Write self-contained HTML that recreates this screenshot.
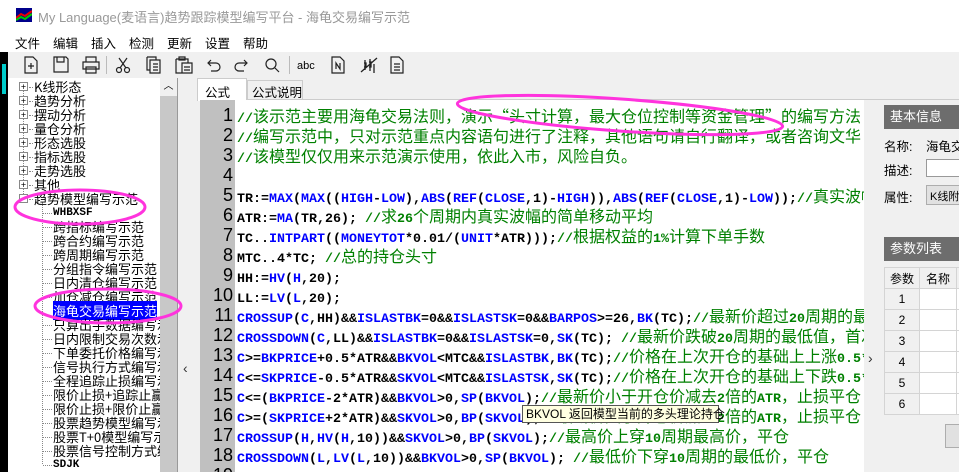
<!DOCTYPE html>
<html><head><meta charset="utf-8"><style>
*{margin:0;padding:0;box-sizing:border-box}
body{width:959px;height:472px;overflow:hidden;background:#f0f0f0;position:relative;font-family:"Liberation Sans","Noto Sans CJK SC",sans-serif;font-size:12px}
.abs{position:absolute}
#title{left:0;top:0;width:959px;height:32px;background:#fff}
#title span{position:absolute;left:38px;top:7px;font-size:13px;color:#999;white-space:nowrap}
#menu{left:0;top:32px;width:959px;height:20px;background:#fff;font-size:12.5px}
#menu span{position:absolute;top:1px}
#tb{left:8px;top:52px;width:951px;height:26px;background:#f0f0f0}
#tb svg{position:absolute;top:4px}
#strip{left:0;top:52px;width:8px;height:420px;background:#000}
#tree{left:8px;top:78px;width:152px;height:394px;background:#fff;font-family:"WenQuanYi Zen Hei","Noto Sans CJK SC",sans-serif;font-size:13px;overflow:hidden}
#tree div{position:absolute;white-space:nowrap;line-height:14px;height:14px}
.pm{position:absolute;left:11px;width:9px;height:9px;border:1px solid #888;font-size:9px;line-height:7px;text-align:center;color:#000;background:#fff}
.dl{position:absolute;height:0;border-top:1px dotted #888}
#sb{left:160px;top:78px;width:17px;height:394px;background:#c8c8c8}
#split{left:177px;top:78px;width:23px;height:394px;background:#f0f0f0;border-left:1px solid #999}
#code{left:200px;top:100px;width:664px;height:372px;background:#fff;overflow:hidden}
#gut{left:0;top:0;width:35px;height:372px;background:#c0c0c0}
.ln{position:absolute;left:0;width:33px;text-align:right;font-family:"Liberation Sans",sans-serif;font-size:18px;line-height:20px;color:#000}
.cl{position:absolute;left:37px;white-space:pre;height:20px;line-height:20px;font-family:"Noto Sans CJK SC",sans-serif;font-size:16px;color:#000}
.cl b,.cl s{font-family:"Liberation Mono",monospace;font-size:13.33px;font-weight:bold;text-decoration:none}
.k{color:#0000ff}.g{color:#008000}
#right{left:864px;top:100px;width:95px;height:372px;background:#f0f0f0}
.hd{position:absolute;left:20px;width:80px;height:24px;background:#6d6d6d;color:#fff;font-size:13px;line-height:24px;padding-left:6px}
table{position:absolute;left:20px;top:167px;border-collapse:collapse;font-size:12px;table-layout:fixed;width:110px}
td{border:1px solid #d4d4d4;height:21px;text-align:center;background:#fff}
td.h{background:#f0f0f0}
</style></head><body>
<div id="title" class="abs">
<svg class="abs" style="left:16px;top:8px" width="16" height="14"><rect width="16" height="14" fill="#00008b"/><path d="M0 10 L5 6 L9 8 L16 3" stroke="#e00" stroke-width="2" fill="none"/><path d="M0 12 L5 9 L9 11 L16 6" stroke="#0c0" stroke-width="2" fill="none"/></svg>
<span>My Language(麦语言)趋势跟踪模型编写平台 - 海龟交易编写示范</span></div>
<div id="menu" class="abs"><span style="left:15px">文件</span><span style="left:53px">编辑</span><span style="left:91px">插入</span><span style="left:129px">检测</span><span style="left:167px">更新</span><span style="left:205px">设置</span><span style="left:243px">帮助</span></div>
<div id="strip" class="abs"><div class="abs" style="left:2px;top:12px;width:4px;height:30px;background:#0cc"></div></div>
<div id="tb" class="abs">
<svg style="left:15px" width="16" height="18" fill="none" stroke="#222" stroke-width="1.2"><path d="M2 1h8l4 4v12H2z M5 10h6 M8 7v6"/></svg>
<svg style="left:45px" width="16" height="18" fill="none" stroke="#222" stroke-width="1.2"><path d="M1 1h12l2 2v13H1z M4 1v5h7V1"/></svg>
<svg style="left:74px" width="18" height="18" fill="none" stroke="#222" stroke-width="1.2"><path d="M4 6V1h10v5 M1 6h16v7H1z M4 11h10v6H4z"/></svg>
<div class="abs" style="left:98px;top:4px;width:1px;height:18px;background:#bbb"></div>
<svg style="left:107px" width="16" height="18" fill="none" stroke="#222" stroke-width="1.2"><circle cx="4" cy="14" r="2.5"/><circle cx="12" cy="14" r="2.5"/><path d="M5 12L12 2 M11 12L4 2"/></svg>
<svg style="left:138px" width="16" height="18" fill="none" stroke="#222" stroke-width="1.2"><path d="M4 4h10v13H4z M1 1h9v3 M1 1v13h3 M7 8h5 M7 11h5 M7 14h5"/></svg>
<svg style="left:167px" width="18" height="18" fill="none" stroke="#222" stroke-width="1.2"><path d="M1 3h12v4 M1 3v14h6 M4 1h6v3H4z M7 7h10v10H7z M9 11h6 M9 14h6"/></svg>
<svg style="left:197px" width="16" height="18" fill="none" stroke="#222" stroke-width="1.2"><path d="M3 7h8a4 4 0 0 1 0 8H6 M6 4L3 7l3 3"/></svg>
<svg style="left:226px" width="16" height="18" fill="none" stroke="#222" stroke-width="1.2"><path d="M13 7H5a4 4 0 0 0 0 8h5 M10 4l3 3-3 3"/></svg>
<svg style="left:256px" width="16" height="18" fill="none" stroke="#222" stroke-width="1.2"><circle cx="7" cy="8" r="5"/><path d="M11 12l4 4"/></svg>
<div class="abs" style="left:281px;top:4px;width:1px;height:18px;background:#bbb"></div>
<span class="abs" style="left:289px;top:8px;font-size:11px">abc</span>
<svg style="left:322px" width="16" height="18" fill="none" stroke="#222" stroke-width="1.2"><path d="M2 1h8l4 4v12H2z M6 13V7l4 6V7"/></svg>
<svg style="left:352px" width="18" height="18" fill="none" stroke="#222" stroke-width="1.3"><path d="M1 16L17 2 M5 4v10 M4 7h2v4H4 M10 3v12 M9 6h2v5H9 M14 8v9"/></svg>
<svg style="left:381px" width="16" height="18" fill="none" stroke="#222" stroke-width="1.2"><path d="M2 1h8l4 4v12H2z M5 8h6 M5 11h6 M5 14h6"/></svg>
</div>
<div id="tree" class="abs">
<div style="left:15px;top:8px;width:0;height:114px;border-left:1px dotted #888"></div>
<div style="left:34px;top:124px;width:0;height:262px;border-left:1px dotted #888"></div>
<div style="top:2px;left:0"><span class="pm" style="top:2px">+</span><span class="dl" style="left:21px;top:7px;width:4px"></span><span style="position:absolute;left:26px">K线形态</span></div>
<div style="top:16px;left:0"><span class="pm" style="top:2px">+</span><span class="dl" style="left:21px;top:7px;width:4px"></span><span style="position:absolute;left:26px">趋势分析</span></div>
<div style="top:30px;left:0"><span class="pm" style="top:2px">+</span><span class="dl" style="left:21px;top:7px;width:4px"></span><span style="position:absolute;left:26px">摆动分析</span></div>
<div style="top:44px;left:0"><span class="pm" style="top:2px">+</span><span class="dl" style="left:21px;top:7px;width:4px"></span><span style="position:absolute;left:26px">量仓分析</span></div>
<div style="top:58px;left:0"><span class="pm" style="top:2px">+</span><span class="dl" style="left:21px;top:7px;width:4px"></span><span style="position:absolute;left:26px">形态选股</span></div>
<div style="top:72px;left:0"><span class="pm" style="top:2px">+</span><span class="dl" style="left:21px;top:7px;width:4px"></span><span style="position:absolute;left:26px">指标选股</span></div>
<div style="top:86px;left:0"><span class="pm" style="top:2px">+</span><span class="dl" style="left:21px;top:7px;width:4px"></span><span style="position:absolute;left:26px">走势选股</span></div>
<div style="top:100px;left:0"><span class="pm" style="top:2px">+</span><span class="dl" style="left:21px;top:7px;width:4px"></span><span style="position:absolute;left:26px">其他</span></div>
<div style="top:114px;left:0"><span class="pm" style="top:2px">−</span><span class="dl" style="left:21px;top:7px;width:4px"></span><span style="position:absolute;left:26px">趋势模型编写示范</span></div>
<div style="left:35px;top:135px;width:9px;border-top:1px dotted #888;height:0"></div>
<div style="left:45px;top:128px;font-family:'Liberation Mono';font-size:11px;font-weight:bold">WHBXSF</div>
<div style="left:45px;top:142px">跨指标编写示范</div>
<div style="left:45px;top:156px">跨合约编写示范</div>
<div style="left:45px;top:170px">跨周期编写示范</div>
<div style="left:45px;top:184px">分组指令编写示范</div>
<div style="left:45px;top:198px">日内清仓编写示范</div>
<div style="left:45px;top:212px">加仓减仓编写示范</div>
<div style="left:45px;top:226px"><span style="background:#00f;color:#fff">海龟交易编写示范</span></div>
<div style="left:45px;top:240px">只算出手数据编写示范</div>
<div style="left:45px;top:254px">日内限制交易次数示范</div>
<div style="left:45px;top:268px">下单委托价格编写示范</div>
<div style="left:45px;top:282px">信号执行方式编写示范</div>
<div style="left:45px;top:296px">全程追踪止损编写示范</div>
<div style="left:45px;top:310px">限价止损+追踪止赢编写</div>
<div style="left:45px;top:324px">限价止损+限价止赢编写</div>
<div style="left:45px;top:338px">股票趋势模型编写示范</div>
<div style="left:45px;top:352px">股票T+0模型编写示范</div>
<div style="left:45px;top:366px">股票信号控制方式编写</div>
<div style="left:45px;top:380px;font-family:'Liberation Mono';font-size:11px;font-weight:bold">SDJK</div>
<div style="left:35px;top:149px;width:9px;border-top:1px dotted #888;height:0"></div>
<div style="left:35px;top:163px;width:9px;border-top:1px dotted #888;height:0"></div>
<div style="left:35px;top:177px;width:9px;border-top:1px dotted #888;height:0"></div>
<div style="left:35px;top:191px;width:9px;border-top:1px dotted #888;height:0"></div>
<div style="left:35px;top:205px;width:9px;border-top:1px dotted #888;height:0"></div>
<div style="left:35px;top:219px;width:9px;border-top:1px dotted #888;height:0"></div>
<div style="left:35px;top:247px;width:9px;border-top:1px dotted #888;height:0"></div>
<div style="left:35px;top:261px;width:9px;border-top:1px dotted #888;height:0"></div>
<div style="left:35px;top:275px;width:9px;border-top:1px dotted #888;height:0"></div>
<div style="left:35px;top:289px;width:9px;border-top:1px dotted #888;height:0"></div>
<div style="left:35px;top:303px;width:9px;border-top:1px dotted #888;height:0"></div>
<div style="left:35px;top:317px;width:9px;border-top:1px dotted #888;height:0"></div>
<div style="left:35px;top:331px;width:9px;border-top:1px dotted #888;height:0"></div>
<div style="left:35px;top:345px;width:9px;border-top:1px dotted #888;height:0"></div>
<div style="left:35px;top:359px;width:9px;border-top:1px dotted #888;height:0"></div>
<div style="left:35px;top:373px;width:9px;border-top:1px dotted #888;height:0"></div>
<div style="left:35px;top:387px;width:9px;border-top:1px dotted #888;height:0"></div>
</div>
<div id="sb" class="abs"><div class="abs" style="left:0;top:0;width:17px;height:18px;background:#f0f0f0;text-align:center;font-size:10px;line-height:18px">︿</div></div>
<div id="split" class="abs"><div class="abs" style="left:5px;top:282px;font-size:14px;color:#333">‹</div></div>
<div class="abs" style="left:197px;top:78px;width:50px;height:23px;background:#fff;border:1px solid #ccc;border-bottom:none;font-size:12.5px;padding:3px 0 0 7px">公式</div>
<div class="abs" style="left:247px;top:80px;width:56px;height:20px;background:#f0f0f0;border:1px solid #ccc;font-size:12.5px;padding:1px 0 0 4px">公式说明</div>
<div class="abs" style="left:303px;top:99px;width:656px;height:1px;background:#ccc"></div>
<div id="code" class="abs">
<div id="gut" class="abs"></div>
<div class="ln" style="top:5px">1</div><div class="ln" style="top:25px">2</div><div class="ln" style="top:45px">3</div><div class="ln" style="top:65px">4</div><div class="ln" style="top:85px">5</div><div class="ln" style="top:105px">6</div><div class="ln" style="top:125px">7</div><div class="ln" style="top:145px">8</div><div class="ln" style="top:165px">9</div><div class="ln" style="top:185px">10</div><div class="ln" style="top:205px">11</div><div class="ln" style="top:225px">12</div><div class="ln" style="top:245px">13</div><div class="ln" style="top:265px">14</div><div class="ln" style="top:285px">15</div><div class="ln" style="top:305px">16</div><div class="ln" style="top:325px">17</div><div class="ln" style="top:345px">18</div><div class="ln" style="top:365px">19</div>
<div class="cl g" style="top:5px"><b>//</b>该示范主要用海龟交易法则，演示“头寸计算，最大仓位控制等资金管理”的编写方法</div>
<div class="cl g" style="top:25px"><b>//</b>编写示范中，只对示范重点内容语句进行了注释，其他语句请自行翻译，或者咨询文华</div>
<div class="cl g" style="top:45px"><b>//</b>该模型仅仅用来示范演示使用，依此入市，风险自负。</div>
<div class="cl" style="top:85px"><b>TR:=<s class="k">MAX</s>(<s class="k">MAX</s>((<s class="k">HIGH</s>-<s class="k">LOW</s>),<s class="k">ABS</s>(<s class="k">REF</s>(<s class="k">CLOSE</s>,1)-<s class="k">HIGH</s>)),<s class="k">ABS</s>(<s class="k">REF</s>(<s class="k">CLOSE</s>,1)-<s class="k">LOW</s>));</b><span class="g"><b>//</b>真实波幅</span></div>
<div class="cl" style="top:105px"><b>ATR:=<s class="k">MA</s>(TR,26); </b><span class="g"><b>//</b>求<b>26</b>个周期内真实波幅的简单移动平均</span></div>
<div class="cl" style="top:125px"><b>TC..<s class="k">INTPART</s>((<s class="k">MONEYTOT</s>*0.01/(<s class="k">UNIT</s>*ATR)));</b><span class="g"><b>//</b>根据权益的<b>1%</b>计算下单手数</span></div>
<div class="cl" style="top:145px"><b>MTC..4*TC; </b><span class="g"><b>//</b>总的持仓头寸</span></div>
<div class="cl" style="top:165px"><b>HH:=<s class="k">HV</s>(<s class="k">H</s>,20);</b></div>
<div class="cl" style="top:185px"><b>LL:=<s class="k">LV</s>(<s class="k">L</s>,20);</b></div>
<div class="cl" style="top:205px"><b><s class="k">CROSSUP</s>(<s class="k">C</s>,HH)&amp;&amp;<s class="k">ISLASTBK</s>=0&amp;&amp;<s class="k">ISLASTSK</s>=0&amp;&amp;<s class="k">BARPOS</s>&gt;=26,<s class="k">BK</s>(TC);</b><span class="g"><b>//</b>最新价超过<b>20</b>周期的最高</span></div>
<div class="cl" style="top:225px"><b><s class="k">CROSSDOWN</s>(<s class="k">C</s>,LL)&amp;&amp;<s class="k">ISLASTBK</s>=0&amp;&amp;<s class="k">ISLASTSK</s>=0,<s class="k">SK</s>(TC); </b><span class="g"><b>//</b>最新价跌破<b>20</b>周期的最低值，首次</span></div>
<div class="cl" style="top:245px"><b><s class="k">C</s>&gt;=<s class="k">BKPRICE</s>+0.5*ATR&amp;&amp;<s class="k">BKVOL</s>&lt;MTC&amp;&amp;<s class="k">ISLASTBK</s>,<s class="k">BK</s>(TC);</b><span class="g"><b>//</b>价格在上次开仓的基础上上涨<b>0.5*</b></span></div>
<div class="cl" style="top:265px"><b><s class="k">C</s>&lt;=<s class="k">SKPRICE</s>-0.5*ATR&amp;&amp;<s class="k">SKVOL</s>&lt;MTC&amp;&amp;<s class="k">ISLASTSK</s>,<s class="k">SK</s>(TC);</b><span class="g"><b>//</b>价格在上次开仓的基础上下跌<b>0.5*</b></span></div>
<div class="cl" style="top:285px"><b><s class="k">C</s>&lt;=(<s class="k">BKPRICE</s>-2*ATR)&amp;&amp;<s class="k">BKVOL</s>&gt;0,<s class="k">SP</s>(<s class="k">BKVOL</s>);</b><span class="g"><b>//</b>最新价小于开仓价减去<b>2</b>倍的<b>ATR</b>，止损平仓</span></div>
<div class="cl" style="top:305px"><b><s class="k">C</s>&gt;=(<s class="k">SKPRICE</s>+2*ATR)&amp;&amp;<s class="k">SKVOL</s>&gt;0,<s class="k">BP</s>(<s class="k">SKVOL</s>);</b><span class="g"><b>//</b>最新价大于开仓价加上<b>2</b>倍的<b>ATR</b>，止损平仓</span></div>
<div class="cl" style="top:325px"><b><s class="k">CROSSUP</s>(<s class="k">H</s>,<s class="k">HV</s>(<s class="k">H</s>,10))&amp;&amp;<s class="k">SKVOL</s>&gt;0,<s class="k">BP</s>(<s class="k">SKVOL</s>);</b><span class="g"><b>//</b>最高价上穿<b>10</b>周期最高价，平仓</span></div>
<div class="cl" style="top:345px"><b><s class="k">CROSSDOWN</s>(<s class="k">L</s>,<s class="k">LV</s>(<s class="k">L</s>,10))&amp;&amp;<s class="k">BKVOL</s>&gt;0,<s class="k">SP</s>(<s class="k">BKVOL</s>); </b><span class="g"><b>//</b>最低价下穿<b>10</b>周期的最低价，平仓</span></div>
<div class="cl" style="top:365px"><b><s class="k">TRACE_LOG</s>(1);</b></div>
<div class="abs" style="left:322px;top:305px;width:197px;height:18px;background:#ffffe1;border:1px solid #555;font-size:12px;line-height:16px;padding-left:3px;white-space:nowrap;font-family:'Liberation Sans','WenQuanYi Zen Hei',sans-serif">BKVOL 返回模型当前的多头理论持仓</div>
</div>
<div id="right" class="abs">
<div class="abs" style="left:4px;top:250px;font-size:14px;color:#333">›</div>
<div class="hd" style="top:5px">基本信息</div>
<div class="abs" style="left:20px;top:36px;font-size:12.5px">名称:</div><div class="abs" style="left:62px;top:36px;font-size:12.5px;white-space:nowrap">海龟交易</div>
<div class="abs" style="left:20px;top:60px;font-size:12.5px">描述:</div><div class="abs" style="left:62px;top:59px;width:40px;height:18px;background:#fff;border:1px solid #999"></div>
<div class="abs" style="left:20px;top:87px;font-size:12.5px">属性:</div><div class="abs" style="left:62px;top:85px;width:40px;height:20px;background:#e1e1e1;border:1px solid #adadad;font-size:11px;padding:2px 3px;white-space:nowrap">K线附</div>
<div class="hd" style="top:137px">参数列表</div>
<table><colgroup><col style="width:35px"><col style="width:37px"><col style="width:38px"></colgroup><tr><td class="h">参数</td><td class="h">名称</td><td class="h"></td></tr>
<tr><td class="h">1</td><td></td><td></td></tr><tr><td class="h">2</td><td></td><td></td></tr><tr><td class="h">3</td><td></td><td></td></tr><tr><td class="h">4</td><td></td><td></td></tr><tr><td class="h">5</td><td></td><td></td></tr><tr><td class="h">6</td><td></td><td></td></tr></table>
<div class="abs" style="left:81px;top:324px;width:30px;height:24px;background:#e1e1e1;border:1px solid #adadad"></div>
</div>
<svg class="abs" style="left:0;top:0" width="959" height="472"><g fill="none" stroke="#ff33dd" stroke-width="3"><ellipse cx="620" cy="115" rx="163" ry="16" transform="rotate(4 620 115)"/><ellipse cx="80" cy="207" rx="65" ry="17"/><ellipse cx="108" cy="306" rx="73" ry="17"/></g></svg>
</body></html>
